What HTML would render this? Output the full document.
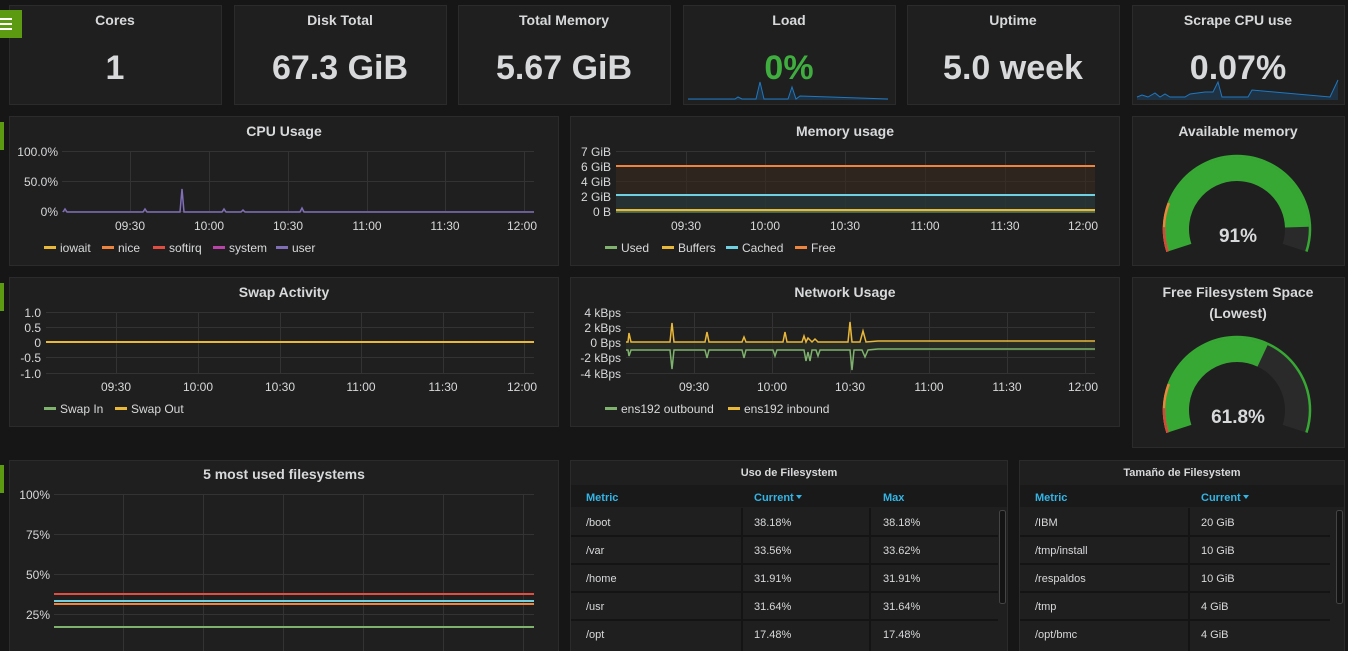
<!DOCTYPE html>
<html><head><meta charset="utf-8"><style>
html,body{margin:0;padding:0;background:#161616;width:1348px;height:651px;overflow:hidden}
svg{display:block;font-family:"Liberation Sans",sans-serif}
</style></head><body>
<svg width="1348" height="651" viewBox="0 0 1348 651" xmlns="http://www.w3.org/2000/svg">
<rect width="1348" height="651" fill="#161616"/>
<g fill="#1f1f20" stroke="#2b2b2c">
<rect x="9.5" y="5.5" width="212" height="99"/>
<rect x="234.5" y="5.5" width="212" height="99"/>
<rect x="458.5" y="5.5" width="212" height="99"/>
<rect x="683.5" y="5.5" width="212" height="99"/>
<rect x="907.5" y="5.5" width="212" height="99"/>
<rect x="1132.5" y="5.5" width="212" height="99"/>
<rect x="9.5" y="116.5" width="549" height="149"/>
<rect x="570.5" y="116.5" width="549" height="149"/>
<rect x="1132.5" y="116.5" width="212" height="149"/>
<rect x="9.5" y="277.5" width="549" height="149"/>
<rect x="570.5" y="277.5" width="549" height="149"/>
<rect x="1132.5" y="277.5" width="212" height="170"/>
<rect x="9.5" y="460.5" width="549" height="200"/>
<rect x="570.5" y="460.5" width="437" height="200"/>
<rect x="1019.5" y="460.5" width="325" height="200"/>
</g>
<rect x="0" y="10" width="22" height="28" fill="#5b9a11"/>
<g stroke="#fff" stroke-width="2"><line x1="0" y1="19" x2="12" y2="19"/><line x1="0" y1="24" x2="12" y2="24"/><line x1="0" y1="29" x2="12" y2="29"/></g>
<rect x="0" y="122" width="4" height="28" fill="#5b9a11"/>
<rect x="0" y="283" width="4" height="28" fill="#5b9a11"/>
<rect x="0" y="465" width="4" height="28" fill="#5b9a11"/>

<g fill="#d8d9da" font-weight="bold" font-size="14" text-anchor="middle">
<text x="115" y="25">Cores</text><text x="340" y="25">Disk Total</text><text x="564" y="25">Total Memory</text>
<text x="789" y="25">Load</text><text x="1013" y="25">Uptime</text><text x="1238" y="25">Scrape CPU use</text>
<text x="284" y="136">CPU Usage</text><text x="845" y="136">Memory usage</text><text x="1238" y="136">Available memory</text>
<text x="284" y="297">Swap Activity</text><text x="845" y="297">Network Usage</text>
<text x="1238" y="297">Free Filesystem Space</text><text x="1238" y="318">(Lowest)</text>
<text x="284" y="479">5 most used filesystems</text>
</g>
<g fill="#d8d9da" font-weight="bold" font-size="11" text-anchor="middle">
<text x="789" y="476">Uso de Filesystem</text><text x="1182" y="476">Tamaño de Filesystem</text>
</g>

<path d="M688,100 L688,99 L735,99 L738,97 L742,99 L756,99 L760,82 L764,99 L788,99 L792,87 L796,99 L800,96 L830,97 L888,99 L888,100Z" fill="#1f3a52" opacity="0.7"/>
<polyline points="688,99 735,99 738,97 742,99 756,99 760,82 764,99 788,99 792,87 796,99 800,96 830,97 888,99" fill="none" stroke="#1f78c1" stroke-width="1"/>
<path d="M1137,100 L1137,97 L1142,95 L1148,97 L1155,93 L1160,97 L1165,94 L1170,97 L1185,97 L1190,94 L1205,92 L1213,92 L1218,82 L1222,97 L1248,97 L1252,90 L1330,97 L1338,80 L1338,100Z" fill="#1f3a52" opacity="0.7"/>
<polyline points="1137,97 1142,95 1148,97 1155,93 1160,97 1165,94 1170,97 1185,97 1190,94 1205,92 1213,92 1218,82 1222,97 1248,97 1252,90 1330,97 1338,80" fill="none" stroke="#1f78c1" stroke-width="1"/>

<g font-weight="bold" font-size="34" text-anchor="middle" fill="#d8d9da">
<text x="115" y="79">1</text><text x="340" y="79">67.3 GiB</text><text x="564" y="79">5.67 GiB</text>
<text x="789" y="79" fill="#3fae3f">0%</text><text x="1013" y="79">5.0 week</text><text x="1238" y="79">0.07%</text>
</g>

<g stroke="#333" stroke-width="1">
<path d="M62,151.5H534M62,181.5H534M62,211.5H534M130.5,151V212M209.5,151V212M288.5,151V212M367.5,151V212M445.5,151V212M524.5,151V212"/>
<path d="M616,151.5H1095M616,166.5H1095M616,181.5H1095M616,196.5H1095M616,211.5H1095M686.5,151V212M765.5,151V212M845.5,151V212M925.5,151V212M1005.5,151V212M1085.5,151V212"/>
<path d="M46,312.5H534M46,327.5H534M46,342.5H534M46,357.5H534M46,373.5H534M116.5,312V374M198.5,312V374M280.5,312V374M361.5,312V374M443.5,312V374M524.5,312V374"/>
<path d="M626,312.5H1095M626,327.5H1095M626,342.5H1095M626,357.5H1095M626,373.5H1095M694.5,312V374M772.5,312V374M850.5,312V374M929.5,312V374M1007.5,312V374M1085.5,312V374"/>
<path d="M54,494.5H534M54,534.5H534M54,574.5H534M54,614.5H534M123.5,494V651M203.5,494V651M283.5,494V651M363.5,494V651M443.5,494V651M523.5,494V651"/>
</g>
<g fill="#d8d9da" font-size="12" text-anchor="end">
<text x="58" y="156">100.0%</text><text x="58" y="186">50.0%</text><text x="58" y="216">0%</text>
<text x="611" y="156">7 GiB</text><text x="611" y="171">6 GiB</text><text x="611" y="186">4 GiB</text><text x="611" y="201">2 GiB</text><text x="611" y="216">0 B</text>
<text x="41" y="317">1.0</text><text x="41" y="332">0.5</text><text x="41" y="347">0</text><text x="41" y="362">-0.5</text><text x="41" y="378">-1.0</text>
<text x="621" y="317">4 kBps</text><text x="621" y="332">2 kBps</text><text x="621" y="347">0 Bps</text><text x="621" y="362">-2 kBps</text><text x="621" y="378">-4 kBps</text>
<text x="50" y="499">100%</text><text x="50" y="539">75%</text><text x="50" y="579">50%</text><text x="50" y="619">25%</text>
</g>
<g fill="#d8d9da" font-size="12" text-anchor="middle">
<text x="130" y="230">09:30</text><text x="209" y="230">10:00</text><text x="288" y="230">10:30</text><text x="367" y="230">11:00</text><text x="445" y="230">11:30</text><text x="522" y="230">12:00</text>
<text x="686" y="230">09:30</text><text x="765" y="230">10:00</text><text x="845" y="230">10:30</text><text x="925" y="230">11:00</text><text x="1005" y="230">11:30</text><text x="1083" y="230">12:00</text>
<text x="116" y="391">09:30</text><text x="198" y="391">10:00</text><text x="280" y="391">10:30</text><text x="361" y="391">11:00</text><text x="443" y="391">11:30</text><text x="522" y="391">12:00</text>
<text x="694" y="391">09:30</text><text x="772" y="391">10:00</text><text x="850" y="391">10:30</text><text x="929" y="391">11:00</text><text x="1007" y="391">11:30</text><text x="1083" y="391">12:00</text>
</g>

<polyline points="63,212 65,209 67,212 143,212 145,209 147,212 180,212 182,189 184,212 222,212 224,209 226,212 241,212 243,210 245,212 300,212 302,208 304,212 534,212" fill="none" stroke="#806eb7" stroke-width="1.5"/>
<rect x="616" y="166" width="479" height="46" fill="#3a2a1f" opacity="0.6"/>
<rect x="616" y="195" width="479" height="17" fill="#1f3a3f" opacity="0.6"/>
<line x1="616" y1="166" x2="1095" y2="166" stroke="#ef843c" stroke-width="2"/>
<line x1="616" y1="195" x2="1095" y2="195" stroke="#6ed0e0" stroke-width="2"/>
<line x1="616" y1="210" x2="1095" y2="210" stroke="#eab839" stroke-width="2"/>
<line x1="616" y1="212" x2="1095" y2="212" stroke="#7eb26d" stroke-width="1"/>
<line x1="46" y1="342" x2="534" y2="342" stroke="#eab839" stroke-width="2"/>
<rect x="626" y="342" width="469" height="9" fill="#2a2e26" opacity="0.8"/>
<polyline points="626,350 628,350 629,356 631,350 670,350 672,369 674,350 705,350 707,358 709,350 742,350 744,358 746,350 773,350 775,356 777,350 804,350 806,361 808,352 810,361 812,350 816,350 818,356 820,350 850,350 852,370 854,350 862,350 865,357 868,350 878,349 1095,349" fill="none" stroke="#7eb26d" stroke-width="1.5"/>
<polyline points="626,342 628,342 629,333 631,342 670,342 672,323 674,342 705,342 707,332 709,342 742,342 744,337 746,342 783,342 785,332 787,342 802,342 804,336 806,342 808,338 812,342 815,339 818,342 848,342 850,322 852,342 860,342 863,331 866,342 878,341 1095,341" fill="none" stroke="#eab839" stroke-width="1.5"/>
<line x1="54" y1="594" x2="534" y2="594" stroke="#e24d42" stroke-width="2"/>
<line x1="54" y1="601" x2="534" y2="601" stroke="#6ed0e0" stroke-width="2"/>
<line x1="54" y1="604" x2="534" y2="604" stroke="#ef843c" stroke-width="2"/>
<line x1="54" y1="627" x2="534" y2="627" stroke="#7eb26d" stroke-width="2"/>

<g font-size="12" fill="#d8d9da">
<rect x="44" y="246" width="12" height="3" fill="#eab839"/><text x="60" y="252">iowait</text>
<rect x="102" y="246" width="12" height="3" fill="#ef843c"/><text x="118" y="252">nice</text>
<rect x="153" y="246" width="12" height="3" fill="#e24d42"/><text x="169" y="252">softirq</text>
<rect x="213" y="246" width="12" height="3" fill="#ba43a9"/><text x="229" y="252">system</text>
<rect x="276" y="246" width="12" height="3" fill="#806eb7"/><text x="292" y="252">user</text>
<rect x="605" y="246" width="12" height="3" fill="#7eb26d"/><text x="621" y="252">Used</text>
<rect x="662" y="246" width="12" height="3" fill="#eab839"/><text x="678" y="252">Buffers</text>
<rect x="726" y="246" width="12" height="3" fill="#6ed0e0"/><text x="742" y="252">Cached</text>
<rect x="795" y="246" width="12" height="3" fill="#ef843c"/><text x="811" y="252">Free</text>
<rect x="44" y="407" width="12" height="3" fill="#7eb26d"/><text x="60" y="413">Swap In</text>
<rect x="115" y="407" width="12" height="3" fill="#eab839"/><text x="131" y="413">Swap Out</text>
<rect x="605" y="407" width="12" height="3" fill="#7eb26d"/><text x="621" y="413">ens192 outbound</text>
<rect x="728" y="407" width="12" height="3" fill="#eab839"/><text x="744" y="413">ens192 inbound</text>
</g>

<g fill="none">
<path d="M1179.94,247.54 A60,60 0 1 1 1294.06,247.54" stroke="#2a2a2b" stroke-width="24"/>
<path d="M1179.94,247.54 A60,60 0 1 1 1294.06,247.54" stroke="#37a833" stroke-width="24" pathLength="100" stroke-dasharray="91 200"/>
<path d="M1167.57,251.56 A73,73 0 1 1 1306.43,251.56" stroke="#37a833" stroke-width="2.5"/>
<path d="M1167.57,251.56 A73,73 0 1 1 1306.43,251.56" stroke="#ef843c" stroke-width="2.5" pathLength="100" stroke-dasharray="18 200"/>
<path d="M1167.57,251.56 A73,73 0 1 1 1306.43,251.56" stroke="#d44a3a" stroke-width="2.5" pathLength="100" stroke-dasharray="9 200"/>
<path d="M1179.94,428.54 A60,60 0 1 1 1294.06,428.54" stroke="#2a2a2b" stroke-width="24"/>
<path d="M1179.94,428.54 A60,60 0 1 1 1294.06,428.54" stroke="#37a833" stroke-width="24" pathLength="100" stroke-dasharray="61.8 200"/>
<path d="M1167.57,432.56 A73,73 0 1 1 1306.43,432.56" stroke="#37a833" stroke-width="2.5"/>
<path d="M1167.57,432.56 A73,73 0 1 1 1306.43,432.56" stroke="#ef843c" stroke-width="2.5" pathLength="100" stroke-dasharray="18 200"/>
<path d="M1167.57,432.56 A73,73 0 1 1 1306.43,432.56" stroke="#d44a3a" stroke-width="2.5" pathLength="100" stroke-dasharray="9 200"/>
</g>
<g font-weight="bold" font-size="19" fill="#d8d9da" text-anchor="middle">
<text x="1238" y="242">91%</text><text x="1238" y="423">61.8%</text>
</g>

<rect x="571" y="485" width="436" height="22" fill="#19191a"/>
<rect x="1020" y="485" width="324" height="22" fill="#19191a"/>
<g stroke="#141414" stroke-width="2">
<path d="M571,536H998M571,564H998M571,592H998M571,620H998M742,508V651M870,508V651"/>
<path d="M1020,536H1330M1020,564H1330M1020,592H1330M1020,620H1330M1189,508V651"/>
</g>
<rect x="999.5" y="510.5" width="6" height="93" rx="2" fill="#141414" stroke="#444"/>
<rect x="1336.5" y="510.5" width="6" height="93" rx="2" fill="#141414" stroke="#444"/>
<g font-size="11" font-weight="bold" fill="#33b5e5">
<text x="586" y="501">Metric</text><text x="754" y="501">Current</text><text x="883" y="501">Max</text>
<text x="1035" y="501">Metric</text><text x="1201" y="501">Current</text>
</g>
<path d="M796,495h6l-3,4z M1243,495h6l-3,4z" fill="#33b5e5"/>
<g font-size="11" fill="#d8d9da">
<text x="586" y="526">/boot</text><text x="754" y="526">38.18%</text><text x="883" y="526">38.18%</text>
<text x="586" y="554">/var</text><text x="754" y="554">33.56%</text><text x="883" y="554">33.62%</text>
<text x="586" y="582">/home</text><text x="754" y="582">31.91%</text><text x="883" y="582">31.91%</text>
<text x="586" y="610">/usr</text><text x="754" y="610">31.64%</text><text x="883" y="610">31.64%</text>
<text x="586" y="638">/opt</text><text x="754" y="638">17.48%</text><text x="883" y="638">17.48%</text>
<text x="1035" y="526">/IBM</text><text x="1201" y="526">20 GiB</text>
<text x="1035" y="554">/tmp/install</text><text x="1201" y="554">10 GiB</text>
<text x="1035" y="582">/respaldos</text><text x="1201" y="582">10 GiB</text>
<text x="1035" y="610">/tmp</text><text x="1201" y="610">4 GiB</text>
<text x="1035" y="638">/opt/bmc</text><text x="1201" y="638">4 GiB</text>
</g>
</svg>
</body></html>
